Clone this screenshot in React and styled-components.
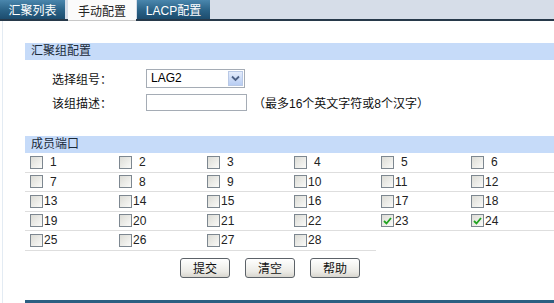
import React from 'react';
import styled, { createGlobalStyle } from 'styled-components';

const GlobalStyle = createGlobalStyle`
  html, body { margin: 0; padding: 0; background: #fff; }
  body {
    font-family: "Liberation Sans", "Noto Sans CJK SC", Arial, sans-serif;
    font-size: 12px;
    color: #000;
  }
`;

const Page = styled.div`
  width: 554px;
  height: 303px;
  overflow: hidden;
  position: relative;
`;

const TabBar = styled.div`
  display: flex;
  height: 19px;
  background: #d6dde8;
  border-bottom: 2px solid #27394a;
`;

const Tab = styled.div`
  height: ${p => (p.$active ? '21px' : '19px')};
  margin-right: ${p => p.$gap || 0}px;
  width: ${p => p.$w}px;
  display: flex;
  align-items: center;
  justify-content: center;
  font-size: 12px;
  color: ${p => (p.$active ? '#222' : '#fff')};
  background: ${p =>
    p.$active ? '#fbfbfb' : 'linear-gradient(#4a86ad, #2a6286 55%, #1c4c6e)'};
  border-bottom: ${p => (p.$active ? '1px solid #c8c8c8' : 'none')};
  box-sizing: border-box;
`;

const Body = styled.div`
  margin-left: 2px;
  border-left: 1px solid #e3ebf3;
  padding-left: 22px;
  padding-top: 22px;
  height: 282px;
  box-sizing: border-box;
  display: flex;
  flex-direction: column;
`;

const SectionHead = styled.div`
  height: 17px;
  line-height: 17px;
  background: #c6dbf9;
  padding-left: 6px;
  color: #1a2a3a;
  font-size: 12px;
`;

const FormRow = styled.div`
  display: flex;
  align-items: center;
  height: 24px;
  padding-left: 27px;
  margin-top: ${p => p.$mt || 0}px;
`;

const Label = styled.div`
  width: 94px;
  font-size: 12px;
  color: #111;
`;

const SelectBox = styled.div`
  width: 99px;
  height: 19px;
  box-sizing: border-box;
  border: 1px solid #a5acb5;
  display: flex;
  align-items: center;
  justify-content: space-between;
  padding-left: 4px;
  background: #fff;
`;

const DropBtn = styled.div`
  width: 15px;
  height: 15px;
  margin-right: 1px;
  background: linear-gradient(#e4ecfb, #b8cdf3);
  border: 1px solid #b9c9e6;
  box-sizing: border-box;
  display: flex;
  align-items: center;
  justify-content: center;
`;

const TextInput = styled.div`
  width: 101px;
  height: 17px;
  box-sizing: border-box;
  border: 1px solid #a5acb5;
  background: #fff;
`;

const Hint = styled.span`
  margin-left: 6px;
  font-size: 12px;
  color: #111;
`;

const Section2 = styled.div`
  margin-top: 22px;
`;

const PortGrid = styled.div`
  display: grid;
  grid-template-columns: 89px 88px 87px 87px 90px 1fr;
`;

const Cell = styled.div`
  height: 19.5px;
  display: flex;
  align-items: center;
  padding-left: 5px;
  border-bottom: 1px solid #dedede;
  box-sizing: border-box;
  font-size: 12px;
  color: #222;
`;

const Box = styled.span`
  width: 13px;
  height: 13px;
  box-sizing: border-box;
  border: 1px solid #7d8790;
  background: linear-gradient(135deg, #dcdcd6, #fafaf8);
  display: inline-flex;
  align-items: center;
  justify-content: center;
  margin-right: ${p => (p.$pad ? 7 : 1)}px;
`;

const ButtonRow = styled.div`
  display: flex;
  gap: 15px;
  padding-left: 155px;
  margin-top: 7px;
`;

const Button = styled.button`
  width: 50px;
  height: 20px;
  padding: 0;
  border: 1px solid #5c6268;
  border-radius: 3px;
  background: linear-gradient(#ffffff, #ecebe6 70%, #d8d6cf);
  font-family: "Noto Sans CJK SC", sans-serif;
  font-size: 12px;
  color: #111;
`;

const BottomBar = styled.div`
  margin-top: auto;
  height: 3px;
  background: #2b5f82;
`;

const Chevron = () => (
  <svg width="9" height="7" viewBox="0 0 9 7">
    <path d="M1 1.5 L4.5 5 L8 1.5" stroke="#4d6185" strokeWidth="1.8" fill="none" />
  </svg>
);

const Check = () => (
  <svg width="9" height="8" viewBox="0 0 9 8">
    <path d="M1 4 L3.5 6.5 L8 1" stroke="#21a321" strokeWidth="1.8" fill="none" />
  </svg>
);

const ports = Array.from({ length: 28 }, (_, i) => i + 1);
const checked = [23, 24];

export default function App() {
  return (
    <Page>
      <GlobalStyle />
      <TabBar>
        <Tab $w={65} $gap={3}>汇聚列表</Tab>
        <Tab $w={68} $gap={1} $active>手动配置</Tab>
        <Tab $w={73}>LACP配置</Tab>
      </TabBar>
      <Body>
        <SectionHead>汇聚组配置</SectionHead>
        <FormRow $mt={6}>
          <Label>选择组号：</Label>
          <SelectBox>
            <span>LAG2</span>
            <DropBtn><Chevron /></DropBtn>
          </SelectBox>
        </FormRow>
        <FormRow>
          <Label>该组描述：</Label>
          <TextInput />
          <Hint>（最多16个英文字符或8个汉字）</Hint>
        </FormRow>
        <Section2>
          <SectionHead>成员端口</SectionHead>
          <PortGrid>
            {ports.map(n => (
              <Cell key={n}>
                <Box $pad={n < 10}>{checked.includes(n) && <Check />}</Box>
                {n}
              </Cell>
            ))}
          </PortGrid>
        </Section2>
        <ButtonRow>
          <Button>提交</Button>
          <Button>清空</Button>
          <Button>帮助</Button>
        </ButtonRow>
        <BottomBar />
      </Body>
    </Page>
  );
}
